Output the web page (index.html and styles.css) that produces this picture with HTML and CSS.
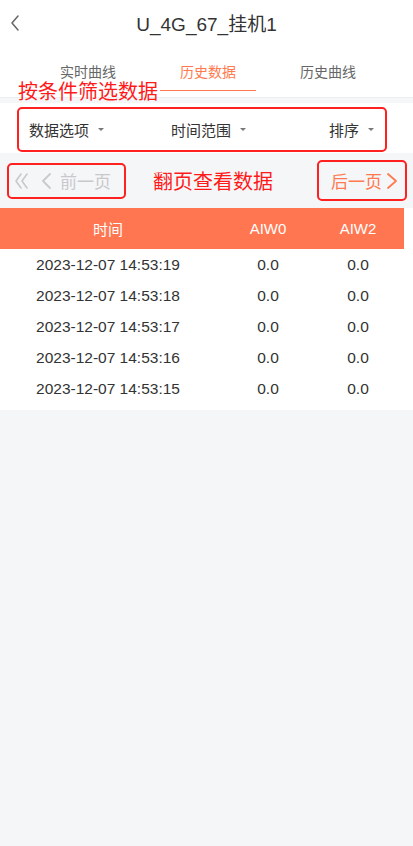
FILE: index.html
```html
<!DOCTYPE html>
<html lang="zh-CN">
<head>
    <meta charset="UTF-8">
    <meta name="viewport" content="width=device-width, initial-scale=1.0">
    <title>U_4G_67_挂机1</title>
    <link rel="stylesheet" href="styles.css">
</head>
<body>

    <!-- Nav bar -->
    <div class="navbar">
        <span class="back">
            <svg width="10" height="16" viewBox="0 0 10 16"><path d="M8 1 L2 8 L8 15" fill="none" stroke="#666" stroke-width="1.5" stroke-linecap="round" stroke-linejoin="round"/></svg>
        </span>
        <div class="title">U_4G_67_挂机1</div>
    </div>

    <!-- Tabs -->
    <div class="tabs">
        <div class="tab">实时曲线</div>
        <div class="tab active">历史数据</div>
        <div class="tab">历史曲线</div>
        <div class="note note-filter">按条件筛选数据</div>
    </div>

    <div class="page">
        <!-- Filter bar -->
        <div class="filter-bar">
            <div class="filter-box">
                <div class="filter-item">数据选项<span class="caret"></span></div>
                <div class="filter-item mid">时间范围<span class="caret"></span></div>
                <div class="filter-item last">排序<span class="caret"></span></div>
            </div>
        </div>

        <!-- Pager -->
        <div class="pager">
            <div class="pager-btn prev">
                <svg width="42" height="18" viewBox="0 0 42 18">
                    <path d="M8 2 L3 9 L8 16 M14 2 L9 9 L14 16" fill="none" stroke="#c9c9cc" stroke-width="1.6" stroke-linecap="round" stroke-linejoin="round"/>
                    <path d="M37 2 L30 9 L37 16" fill="none" stroke="#c9c9cc" stroke-width="1.8" stroke-linecap="round" stroke-linejoin="round"/>
                </svg>
                <span>前一页</span>
            </div>
            <div class="note note-pager">翻页查看数据</div>
            <div class="pager-btn next">
                <span>后一页</span>
                <svg width="14" height="18" viewBox="0 0 14 18"><path d="M3 2 L11 9 L3 16" fill="none" stroke="#ff7a50" stroke-width="1.8" stroke-linecap="round" stroke-linejoin="round"/></svg>
            </div>
        </div>

        <!-- Data table -->
        <div class="table">
            <div class="row head">
                <div class="cell c-time">时间</div>
                <div class="cell c-a">AIW0</div>
                <div class="cell c-b">AIW2</div>
            </div>
            <div class="row">
                <div class="cell c-time">2023-12-07 14:53:19</div>
                <div class="cell c-a">0.0</div>
                <div class="cell c-b">0.0</div>
            </div>
            <div class="row">
                <div class="cell c-time">2023-12-07 14:53:18</div>
                <div class="cell c-a">0.0</div>
                <div class="cell c-b">0.0</div>
            </div>
            <div class="row">
                <div class="cell c-time">2023-12-07 14:53:17</div>
                <div class="cell c-a">0.0</div>
                <div class="cell c-b">0.0</div>
            </div>
            <div class="row">
                <div class="cell c-time">2023-12-07 14:53:16</div>
                <div class="cell c-a">0.0</div>
                <div class="cell c-b">0.0</div>
            </div>
            <div class="row">
                <div class="cell c-time">2023-12-07 14:53:15</div>
                <div class="cell c-a">0.0</div>
                <div class="cell c-b">0.0</div>
            </div>
        </div>
    </div>

</body>
</html>
```

FILE: styles.css
```css
body {
    margin: 0;
    font-family: "Liberation Sans", "Noto Sans CJK SC", sans-serif;
    color: #333;
    background-color: #f5f6f8;
    min-height: 846px;
}

/* Nav bar */
.navbar {
    position: relative;
    height: 50px;
    display: flex;
    align-items: center;
    justify-content: center;
    background-color: #fff;
}

.navbar .back {
    position: absolute;
    left: 10px;
    top: 15px;
}

.navbar .title {
    font-size: 19px;
    color: #333;
    margin-top: -5px;
}

/* Tabs */
.tabs {
    position: relative;
    height: 47px;
    display: flex;
    justify-content: center;
    padding-left: 3px;
    background-color: #fff;
    border-bottom: 1px solid #eceef1;
}

.tab {
    width: 120px;
    text-align: center;
    font-size: 14px;
    line-height: 16px;
    color: #666;
    padding-top: 14px;
    box-sizing: border-box;
}

.tab.active {
    color: #ff7a50;
    position: relative;
}

.tab.active::after {
    content: "";
    position: absolute;
    left: 12px;
    right: 12px;
    top: 40px;
    height: 1px;
    background-color: #ff7a50;
}

/* Red annotations */
.note {
    color: #ff1a1a;
    font-size: 20px;
    font-family: "Noto Sans CJK SC", sans-serif;
    white-space: nowrap;
}

.note-filter {
    position: absolute;
    left: 18px;
    top: 31px;
    line-height: 20px;
}

/* Filter bar */
.page {
    padding-top: 5px;
}

.filter-bar {
    background-color: #fff;
    padding: 4px 26px 1px 17px;
    height: 50px;
    box-sizing: border-box;
}

.filter-box {
    height: 45px;
    border: 2px solid #ff2020;
    border-radius: 5px;
    display: flex;
    align-items: center;
    padding: 0 0 0 10px;
    box-sizing: border-box;
}

.filter-item {
    font-size: 15px;
    color: #333;
    display: flex;
    align-items: center;
}

.filter-item.mid {
    margin-left: 67px;
}

.filter-item.last {
    margin-left: 83px;
}

.caret {
    display: inline-block;
    margin-left: 9px;
    border-left: 3px solid transparent;
    border-right: 3px solid transparent;
    border-top: 3px solid #777;
}

/* Pager */
.pager {
    height: 55px;
    display: flex;
    align-items: center;
    padding: 0 6px 0 7px;
}

.pager-btn {
    display: flex;
    align-items: center;
    border: 2px solid #ff2020;
    border-radius: 5px;
    box-sizing: border-box;
    font-size: 17px;
}

.pager-btn.prev {
    width: 119px;
    height: 36px;
    padding-left: 4px;
    color: #c9c9cc;
}

.pager-btn.prev span {
    margin-left: 5px;
}

.pager-btn.next {
    width: 90px;
    height: 41px;
    margin-left: auto;
    padding-left: 12px;
    color: #ff7a50;
}

.pager-btn.next svg {
    margin-left: 3px;
}

.note-pager {
    margin-left: 27px;
}

/* Table */
.table {
    background-color: #fff;
    padding-bottom: 6px;
}

.row {
    display: flex;
    height: 31px;
    align-items: center;
    font-size: 15.5px;
    color: #333;
}

.row.head {
    height: 41px;
    width: 404px;
    background-color: #ff7650;
    color: #fff;
    font-size: 15px;
}

.cell {
    text-align: center;
}

.c-time {
    width: 216px;
}

.c-a {
    width: 104px;
}

.c-b {
    width: 76px;
}
```
